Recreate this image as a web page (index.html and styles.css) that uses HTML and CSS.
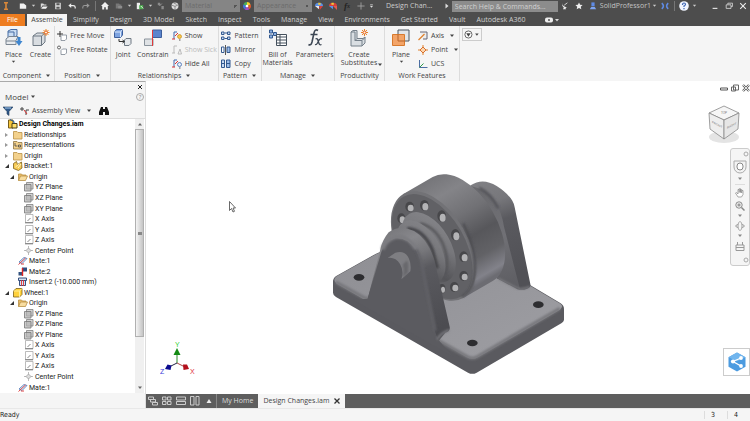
FILE: index.html
```html
<!DOCTYPE html>
<html lang="en">
<head>
  <meta charset="UTF-8">
  <meta name="viewport" content="width=device-width, initial-scale=1.0">
  <title>Design Changes.iam</title>
  <link rel="stylesheet" href="styles.css">
</head>
<body>

<!-- Shared icons -->
<svg class="sprite" aria-hidden="true">
  <symbol id="folder" viewBox="0 0 10 10"><path d="M.5 1.500h3.500l1 1h4v6.500h-8.500z" fill="#f3d18c" stroke="#b78f45" stroke-width=".8"/></symbol>
  <symbol id="folder-open" viewBox="0 0 10 10"><path d="M.5 8.500v-6.500h3l1 1h3.500v1.500" fill="#e9bd68" stroke="#b78f45" stroke-width=".8"/><path d="M.5 8.500l2-4.500h7l-2 4.500z" fill="#f8dda0" stroke="#b78f45" stroke-width=".8"/></symbol>
  <symbol id="plane" viewBox="0 0 10 10"><path d="M2.500.5h6.500v6.500h-6.500z" fill="#d4d4d4" stroke="#808080" stroke-width=".8"/><path d="M.5 2.500h6.500v6.500h-6.500z" fill="#b5b5b5" fill-opacity=".7" stroke="#777" stroke-width=".8"/></symbol>
  <symbol id="axis" viewBox="0 0 10 10"><path d="M1.500.5h7.500v8h-7.500z" fill="#fff" stroke="#aaa" stroke-width=".8"/><path d="M3.500 7l3-3" stroke="#666" fill="none" stroke-width=".8"/><path d="M1 8.800h8" stroke="#777"/></symbol>
  <symbol id="center" viewBox="0 0 10 10"><path d="M4.500 0v9M0 4.500h9" stroke="#bbb"/><path d="M4.500 2l2.500 2.500-2.500 2.500-2.500-2.500z" fill="#ddd" stroke="#999" stroke-width=".7"/></symbol>
  <symbol id="mate-a" viewBox="0 0 10 10"><path d="M1 6l5-4.500 3 1-5 5z" fill="#dce9f7" stroke="#4b76b5" stroke-width=".8"/><path d="M.5 8.500l7-6.500M3 8h3" stroke="#d33" stroke-width=".9"/></symbol>
  <symbol id="mate-b" viewBox="0 0 10 10"><path d="M4 .5h5v4h-5z" fill="#2f4f83"/><path d="M.5 5h4v3.500h-4z" fill="#33527f"/><path d="M4.500 1v8" stroke="#d22" stroke-width="1.400"/></symbol>
  <symbol id="insert" viewBox="0 0 10 10"><path d="M.5 1h8v2.500h-8zM1.500 3.500h6v5h-6z" fill="#d5e2f2" stroke="#36507e"/><path d="M3.500 3v6M5.500 3v6" stroke="#d33" stroke-width=".9"/></symbol>
  <symbol id="assembly" viewBox="0 0 10 10"><path d="M.5 1h4.500v8h-4.500z" fill="#f8c63a" stroke="#765d1a"/><path d="M4 4.500h5v4.500h-5z" fill="#ffdf6b" stroke="#4a3e16"/><path d="M2 .5l4 2v2" stroke="#275a9a" fill="none"/></symbol>
  <symbol id="bracket" viewBox="0 0 10 10"><path d="M.5 2.500l3-2 1 3 4-2.500.5 6-3.500 2.500-5-2z" fill="#f6ca54" stroke="#7d6018" stroke-width=".8"/><path d="M2.500 6l4-3.500M5 7l3-4" stroke="#fff3bf"/></symbol>
  <symbol id="part" viewBox="0 0 10 10"><path d="M.5 3l2.500-2.500h6v6l-2.500 2.500h-6z" fill="#ffd23d" stroke="#7d6018" stroke-width=".8"/><path d="M.5 3h6v6M6.500 3l2.500-2.500" fill="none" stroke="#fff0a0" stroke-width=".9"/></symbol>
  <symbol id="reps" viewBox="0 0 10 10"><path d="M.5 1.500h3.500l1 1h4v6.500h-8.500z" fill="#f3d18c" stroke="#8d7342" stroke-width=".8"/><path d="M2 3v3h2.500M5.500 5h2v2h-2z" fill="none" stroke="#444" stroke-width=".8"/></symbol>
  <symbol id="caret" viewBox="0 0 6 4"><path d="M1 .5h4l-2 2.500z" fill="currentColor"/></symbol>
</svg>

<!-- Title bar -->
<header class="titlebar">
  <button class="tb logo" aria-label="Inventor"><svg viewBox="0 0 10 10"><path d="M2.500 1h5M2.500 9h5M5 1v8" stroke="#d9883a" stroke-width="2"/></svg></button>
  <button class="tb" aria-label="New"><svg viewBox="0 0 10 10"><path d="M1 2h5l3 2.500v4h-8z" fill="#f1f1f1"/></svg></button>
  <button class="drop" aria-label="New options"><svg><use href="#caret"/></svg></button>
  <button class="tb" aria-label="Open"><svg viewBox="0 0 10 10"><path d="M1 8v-6h3l1 1h3v1.500h-5z" fill="#ddd"/><path d="M1.500 8.500l2-3h6l-2 3z" fill="#f6f6f6"/></svg></button>
  <button class="tb" aria-label="Save"><svg viewBox="0 0 10 10"><path d="M1.500 1h7v8h-7z" fill="#ddd"/><path d="M3 1.500h4v2.500h-4zM3 6h4v2.500h-4z" fill="#555"/></svg></button>
  <button class="tb" aria-label="Undo"><svg viewBox="0 0 10 10"><path d="M9 8v-1.500q0-2-2.500-2h-4" fill="none" stroke="#eee" stroke-width="1.500"/><path d="M4 1.500v6l-3.500-3z" fill="#eee"/></svg></button>
  <button class="tb" aria-label="Redo"><svg viewBox="0 0 10 10"><path d="M1 8v-1.500q0-2 2.500-2h4" fill="none" stroke="#999" stroke-width="1.300"/><path d="M6 1.500v6l3.500-3z" fill="#999"/></svg></button>
  <span class="bar"></span>
  <button class="tb" aria-label="Home"><svg viewBox="0 0 10 10"><path d="M5 0l5 5h-1.500v4.500h-2.500v-3h-2v3h-2.500v-4.500h-1.500z" fill="#f1f1f1"/></svg></button>
  <button class="tb" aria-label="Team"><svg viewBox="0 0 10 10"><path d="M1 2h4l1 1h2v5h-7z" fill="#777"/><path d="M4 5h5v3h-5z" fill="#8c8c8c"/></svg></button>
  <button class="drop" aria-label="Team options"><svg><use href="#caret"/></svg></button>
  <button class="tb" aria-label="Select"><svg viewBox="0 0 10 10"><path d="M1 1h4v8h-4z" fill="#eee"/><path d="M4 4h5v5h-5z" fill="#4fae52"/><path d="M6 5l3 3" stroke="#fff"/></svg></button>
  <button class="drop" aria-label="Select options"><svg><use href="#caret"/></svg></button>
  <button class="tb" aria-label="Update"><svg viewBox="0 0 10 10"><path d="M1 1h3v3h-3zM5.500 5h3v4h-3z" fill="#8a8a8a"/><path d="M3 5l3-3" stroke="#aaa"/></svg></button>
  <button class="tb" aria-label="Adjust"><svg viewBox="0 0 10 10"><circle cx="5" cy="5" r="4.300" fill="#ddd"/><path d="M1 4l4 1.500 4-2M5 5.500v4M3 1l4 2" stroke="#777" fill="none"/></svg></button>
  <select class="style-select" aria-label="Material"><option>Material</option></select>
  <button class="tb" aria-label="Color wheel"><svg viewBox="0 0 10 10"><path d="M5 5V0a5 5 0 0 1 4.500 3z" fill="#f5d328"/><path d="M5 5l4.500-2a5 5 0 0 1-1.500 6z" fill="#e2572b"/><path d="M5 5l3 4a5 5 0 0 1-6 0z" fill="#a44fc0"/><path d="M5 5l-3 4a5 5 0 0 1-1.500-6z" fill="#3f74d8"/><path d="M5 5L.5 3a5 5 0 0 1 4.500-3z" fill="#49b05a"/><circle cx="5" cy="5" r="1.700" fill="#fff"/></svg></button>
  <select class="style-select" aria-label="Appearance"><option>Appearance</option></select>
  <button class="tb" aria-label="Adjust appearance"><svg viewBox="0 0 10 10"><path d="M0 5a5 4 0 0 1 10 0z" fill="#5c8fe6"/><path d="M0 5h5v4z" fill="#e9e9e9"/><path d="M5 5h5l-4 5z" fill="#d8403a"/><path d="M4 1h3v2.500h-3z" fill="#eecb3b"/></svg></button>
  <button class="tb" aria-label="Clear appearance"><svg viewBox="0 0 10 10"><path d="M0 5a5 4 0 0 1 10 0z" fill="#d8403a"/><path d="M0 5h5v4z" fill="#5c8fe6"/><path d="M5 5h5v5z" fill="#e35b4f"/><path d="M3 1h3v2.500h-3z" fill="#eecb3b"/></svg></button>
  <button class="tb fx" aria-label="Parameters">f<sub>x</sub></button>
  <button class="tb" aria-label="Add"><svg viewBox="0 0 10 10"><path d="M5 .5v9M.5 5h9" stroke="#aaa"/></svg></button>
  <button class="drop" aria-label="Customize"><svg viewBox="0 0 6 6"><path d="M1 .5h4" stroke="#ddd"/><path d="M.5 2.500h5l-2.500 3z" fill="#ddd"/></svg></button>
  <span class="doc-title">Design Chan...</span>
  <svg class="search-arrow" viewBox="0 0 4 6"><path d="M.5.5v5l3-2.500z" fill="#ddd"/></svg>
  <input class="search" type="text" aria-label="Search" placeholder="Search Help &amp; Commands...">
  <button class="tb" aria-label="Communication"><svg viewBox="0 0 10 10"><path d="M1.500 1q0 5 6 5.500l-2 1 1 1.500h-4l1-2q-2.500-2-2-6z" fill="#eee"/><path d="M4 4l4-3" stroke="#eee"/></svg></button>
  <button class="tb" aria-label="Favorites"><svg viewBox="0 0 10 10"><path d="M5 .5l1.400 3 3.100.3-2.300 2.100.7 3.300-2.900-1.700-2.900 1.700.7-3.300-2.300-2.100 3.100-.3z" fill="#eee"/></svg></button>
  <button class="tb" aria-label="Account"><svg viewBox="0 0 10 10"><path d="M3 .5h4v4.500h-4z" fill="#5f8be6"/><path d="M1 9l2-3h4l2 3z" fill="#7da4f2"/></svg></button>
  <button class="user">SolidProfessor1</button>
  <button class="drop" aria-label="Account options"><svg><use href="#caret"/></svg></button>
  <button class="tb" aria-label="Exchange"><svg viewBox="0 0 10 10"><path d="M1 1.500q4 3.500 0 7M9 1.500q-4 3.500 0 7" fill="none" stroke="#5f8be6" stroke-width="2"/></svg></button>
  <span class="bar"></span>
  <button class="tb help-tb" aria-label="Help"><svg viewBox="0 0 10 10"><circle cx="5" cy="5" r="4.800" fill="#f1f5ff"/><path d="M3.500 4q0-2 1.500-2t1.500 1.500q0 .8-1.500 1.500v1M5 7v1.200" fill="none" stroke="#3d66b5" stroke-width="1.200"/></svg></button>
  <button class="drop" aria-label="Help options"><svg><use href="#caret"/></svg></button>
  <div class="window-buttons">
    <button class="tb" aria-label="Minimize"><svg viewBox="0 0 10 10"><path d="M2 8h6" stroke="#ddd" stroke-width="1.500"/></svg></button>
    <button class="tb" aria-label="Restore"><svg viewBox="0 0 10 10"><path d="M3.500 3v-1.500h6v4h-2M1.500 3.500h6v4.500h-6z" fill="none" stroke="#ddd"/></svg></button>
    <button class="tb" aria-label="Close"><svg viewBox="0 0 10 10"><path d="M1.500 1.500l7 7M8.500 1.500l-7 7" stroke="#eee" stroke-width="1.300"/></svg></button>
  </div>
</header>

<!-- Ribbon tabs -->
<nav class="tabs">
  <button class="tab file">File</button>
  <button class="tab active">Assemble</button>
  <button class="tab">Simplify</button>
  <button class="tab">Design</button>
  <button class="tab">3D Model</button>
  <button class="tab">Sketch</button>
  <button class="tab">Inspect</button>
  <button class="tab">Tools</button>
  <button class="tab">Manage</button>
  <button class="tab">View</button>
  <button class="tab">Environments</button>
  <button class="tab">Get Started</button>
  <button class="tab">Vault</button>
  <button class="tab">Autodesk A360</button>
  <button class="tab tab-toggle" aria-label="Ribbon display"><svg viewBox="0 0 16 6"><rect x="1" y=".5" width="8" height="5" rx="2" fill="#eee"/><circle cx="5" cy="3" r="1" fill="#555"/><path d="M11 2h4l-2 2.500z" fill="#ddd"/></svg></button>
</nav>

<!-- Ribbon -->
<section class="ribbon">
  <div class="group component">
    <div class="tools">
      <button class="big"><svg viewBox="0 0 18 18"><path d="M3 2l3-1.500h6v6l-3 2h-6z" fill="#c9dcf2" stroke="#466ca3"/><path d="M3 3h6v5" fill="none" stroke="#466ca3"/><path d="M1 10l3-2.500h9l-2 4v4h-10z" fill="#e8ebee" stroke="#7a8591"/><path d="M1 12h10" stroke="#7a8591"/><path d="M12.500 8h3v4h2l-3.500 5-3.500-5h2z" fill="#3f86cf"/></svg>Place<svg class="mini"><use href="#caret"/></svg></button>
      <button class="big"><svg viewBox="0 0 18 18"><path d="M1 7l4-3h8v9l-3.500 3.500h-8.500z" fill="#d9dde1" stroke="#6e7983"/><path d="M1 7h8.500v9.500M9.500 7l3.500-3" fill="none" stroke="#6e7983"/><path d="M14 0v7M10.500 3.500h7M11.500 1l5 5M16.500 1l-5 5" stroke="#e9892c"/><circle cx="14" cy="3.500" r="1.500" fill="#fff2d5" stroke="#e9692c"/></svg>Create</button>
    </div>
    <h2>Component <svg class="mini"><use href="#caret"/></svg></h2>
  </div>
  <div class="group position">
    <div class="tools">
      <div class="stack">
        <button><svg viewBox="0 0 10 10"><path d="M3 0v6M0 3h6" stroke="#333"/><path d="M4 5.500l1.500-1.500h4v4l-1.500 1.500h-4z" fill="#fff" stroke="#7c8792" stroke-width=".8"/></svg>Free Move</button>
        <button><svg viewBox="0 0 10 10"><circle cx="2" cy="2.500" r="1.500" fill="none" stroke="#444" stroke-width=".8"/><path d="M4 5.500l1.500-1.500h4v4l-1.500 1.500h-4z" fill="#fff" stroke="#7c8792" stroke-width=".8"/></svg>Free Rotate</button>
      </div>
    </div>
    <h2>Position <svg class="mini"><use href="#caret"/></svg></h2>
  </div>
  <div class="group relations">
    <div class="tools">
      <button class="big"><svg viewBox="0 0 18 18"><path d="M.5 3l2-2.500h6v5.500l-2 2.500h-6z" fill="#7da3e0" stroke="#3d5f9c"/><path d="M.5 3h6v5M6.500 3l2-2.500" fill="none" stroke="#dbe8fb"/><path d="M10.500 11l1.500-1.500h5v5l-2 2h-4.500z" fill="#e5e8eb" stroke="#6e7983"/><path d="M5 10v2.500h5M8.500 11l2 1.500-2 1.500" fill="none" stroke="#333"/></svg>Joint</button>
      <button class="big"><svg viewBox="0 0 18 18"><path d="M8.500 1h9v7.500h-9z" fill="#5b84cd" stroke="#3d5f9c"/><path d="M.5 10h8.500v6.500h-8.500z" fill="#dfe2e5" stroke="#8a939c"/><path d="M8.500 1v16" stroke="#e03b3b"/></svg>Constrain</button>
      <div class="stack">
        <button><svg viewBox="0 0 10 10"><path d="M2 8v-7h3" stroke="#4169ad" fill="none"/><path d="M0 8h3M3 5l3-3" stroke="#d33"/><circle cx="7.500" cy="5.500" r="2" fill="#f6c84a" stroke="#c58a1d" stroke-width=".7"/><path d="M7 9h1.500" stroke="#555"/></svg>Show</button>
        <button disabled><svg viewBox="0 0 10 10"><path d="M2 8v-7h3M0 8h3M6 9l2-5 1.500 5z" stroke="#bbb" fill="none"/></svg>Show Sick</button>
        <button><svg viewBox="0 0 10 10"><path d="M2 8v-7h3" stroke="#4169ad" fill="none"/><path d="M0 8h3M3 5l3-3" stroke="#d33"/><circle cx="7.500" cy="5.500" r="2" fill="#e7f0fb" stroke="#4169ad" stroke-width=".8"/><path d="M7 9h1.500" stroke="#555"/></svg>Hide All</button>
      </div>
    </div>
    <h2>Relationships <svg class="mini"><use href="#caret"/></svg></h2>
  </div>
  <div class="group pattern">
    <div class="tools">
      <div class="stack">
        <button><svg viewBox="0 0 10 10"><path d="M.5 1h2.500v2.500h-2.500zM6.500 1h2.500v2.500h-2.500zM.5 6h2.500v2.500h-2.500zM6.500 6h2.500v2.500h-2.500z" fill="#c7daf3" stroke="#33598f"/><path d="M3.500 2h2.500M3.500 7.500h2.500" stroke="#33598f"/></svg>Pattern</button>
        <button><svg viewBox="0 0 10 10"><path d="M.5 2h2.500v5.500h-2.500z" fill="#fff" stroke="#33598f"/><path d="M6 2h3v5.500h-3z" fill="#9dbde8" stroke="#33598f"/><path d="M4.500 0v10" stroke="#555"/></svg>Mirror</button>
        <button><svg viewBox="0 0 10 10"><path d="M.5 1h3v7.500h-3z" fill="#c7daf3" stroke="#33598f"/><path d="M5.500 1h3.500v7.500h-3.500z" fill="#9dbde8" stroke="#33598f"/><path d="M.5 4.500h3M5.500 4.500h3.500" stroke="#33598f"/></svg>Copy</button>
      </div>
    </div>
    <h2>Pattern <svg class="mini"><use href="#caret"/></svg></h2>
  </div>
  <div class="group manage">
    <div class="tools">
      <button class="big"><svg viewBox="0 0 18 18"><path d="M.5 1h3v3h-3zM4.500 3.500h3v3h-3zM.5 6h3v3h-3z" fill="#8db1e3" stroke="#33598f"/><path d="M7.500 5.500h10v11h-10z" fill="#fff" stroke="#44505c"/><path d="M7.500 8h10M7.500 11h10M7.500 14h10M11 5.500v11" stroke="#44505c"/></svg>Bill of<br>Materials</button>
      <button class="big"><svg viewBox="0 0 18 18"><path d="M12 1.500q-3-2-4 2.500l-2 9q-1 4-3.500 2.500M4.500 5.500h7" fill="none" stroke="#3d4754" stroke-width="1.600"/><path d="M9.500 10q2-1 2.500 1.500l1 3q.7 2 2.500 1M16 10q-2-1-3.500 2l-1 2q-1 2-2.500 1.500" fill="none" stroke="#3d4754" stroke-width="1.300"/></svg>Parameters</button>
    </div>
    <h2>Manage <svg class="mini"><use href="#caret"/></svg></h2>
  </div>
  <div class="group productivity">
    <div class="tools">
      <button class="big"><svg viewBox="0 0 18 18"><path d="M1 3l2-1.500h4v8h6l2-1.500v6l-3 3h-11z" fill="#d9dee2" stroke="#75808a"/><path d="M1 3h4v8.500h7v5.500M5 11.500l2-2M12 11.500l3-3" fill="none" stroke="#75808a"/><path d="M14.500 0v7M11 3.500h7M12 1l5 5M17 1l-5 5" stroke="#e9892c"/><circle cx="14.500" cy="3.500" r="1.500" fill="#fff2d5" stroke="#e9692c"/></svg>Create<br>Substitutes</button>
      <svg class="mini side"><use href="#caret"/></svg>
    </div>
    <h2>Productivity</h2>
  </div>
  <div class="group work">
    <div class="tools">
      <button class="big"><svg viewBox="0 0 18 18"><path d="M6 1h11v11h-11z" fill="#e2e5e8" stroke="#4c5660"/><path d="M.5 5.500h12v11h-12z" fill="#f3a468" stroke="#d77a2e"/><path d="M6 5.500v6.500h6.500" stroke="#b7652a" fill="none"/></svg>Plane<svg class="mini"><use href="#caret"/></svg></button>
      <div class="stack">
        <button><svg viewBox="0 0 10 10"><path d="M2 1h7v7h-4" fill="#eee" stroke="#667"/><path d="M.5 9l6-6" stroke="#e0812e" stroke-width="1.300"/></svg>Axis<svg class="mini"><use href="#caret"/></svg></button>
        <button><svg viewBox="0 0 10 10"><path d="M5 0v10M0 5h10" stroke="#e0812e"/><path d="M5 2l3 3-3 3-3-3z" fill="#fbd5ae" stroke="#d9702a"/></svg>Point<svg class="mini"><use href="#caret"/></svg></button>
        <button><svg viewBox="0 0 10 10"><path d="M1.500 1v7.500h8" stroke="#4c6ea3" fill="none"/><path d="M1.500 8.500l4-4" stroke="#2d9a4a"/></svg>UCS</button>
      </div>
    </div>
    <h2>Work Features</h2>
  </div>
  <button class="ribbon-more" aria-label="More panels"><svg viewBox="0 0 18 10"><circle cx="5" cy="5" r="4" fill="#fff" stroke="#555"/><path d="M2.500 3.500h5l-2.500 4z" fill="#444"/><path d="M12.500 4h4l-2 2.500z" fill="#444"/></svg></button>
</section>

<main class="workspace">
  <!-- Model browser -->
  <aside class="browser">
    <div class="browser-top"><button aria-label="Close browser"><svg viewBox="0 0 6 6"><path d="M1 1l4 4M5 1l-4 4" stroke="#222"/></svg></button></div>
    <div class="browser-title"><button>Model <svg class="mini"><use href="#caret"/></svg></button><button class="help" aria-label="Help">?</button></div>
    <div class="browser-tools">
      <button aria-label="Filter"><svg viewBox="0 0 10 10"><path d="M0 1h10l-4 4.500v4l-2-1.500v-2.500z" fill="#315b8d" stroke="#223c5c" stroke-width=".6"/><path d="M2 2h6" stroke="#a9cdf0"/></svg></button>
      <button class="view"><svg viewBox="0 0 10 10"><path d="M0 3h4M2 1v4M6 9v-5h3" stroke="#444" fill="none"/><path d="M4 4l3 4" stroke="#d33"/></svg>Assembly View <svg class="mini"><use href="#caret"/></svg></button>
      <button aria-label="Find"><svg viewBox="0 0 10 10"><path d="M2 1h2v2h2v-2h2l2 5v3h-4v-3h-2v3h-4v-3z" fill="#111"/></svg></button>
    </div>
    <div class="tree-box">
      <ul class="tree">
        <li class="l0 root"><i></i><svg><use href="#assembly"/></svg>Design Changes.iam</li>
        <li class="l1"><i class="closed"></i><svg><use href="#folder"/></svg>Relationships</li>
        <li class="l1"><i class="closed"></i><svg><use href="#reps"/></svg>Representations</li>
        <li class="l1"><i class="closed"></i><svg><use href="#folder"/></svg>Origin</li>
        <li class="l1"><i class="open"></i><svg><use href="#bracket"/></svg>Bracket:1</li>
        <li class="l2"><i class="open"></i><svg><use href="#folder-open"/></svg>Origin</li>
        <li class="l3"><i></i><svg><use href="#plane"/></svg>YZ Plane</li>
        <li class="l3"><i></i><svg><use href="#plane"/></svg>XZ Plane</li>
        <li class="l3"><i></i><svg><use href="#plane"/></svg>XY Plane</li>
        <li class="l3"><i></i><svg><use href="#axis"/></svg>X Axis</li>
        <li class="l3"><i></i><svg><use href="#axis"/></svg>Y Axis</li>
        <li class="l3"><i></i><svg><use href="#axis"/></svg>Z Axis</li>
        <li class="l3"><i></i><svg><use href="#center"/></svg>Center Point</li>
        <li class="l2"><i></i><svg><use href="#mate-a"/></svg>Mate:1</li>
        <li class="l2"><i></i><svg><use href="#mate-b"/></svg>Mate:2</li>
        <li class="l2"><i></i><svg><use href="#insert"/></svg>Insert:2 (-10.000 mm)</li>
        <li class="l1"><i class="open"></i><svg><use href="#part"/></svg>Wheel:1</li>
        <li class="l2"><i class="open"></i><svg><use href="#folder-open"/></svg>Origin</li>
        <li class="l3"><i></i><svg><use href="#plane"/></svg>YZ Plane</li>
        <li class="l3"><i></i><svg><use href="#plane"/></svg>XZ Plane</li>
        <li class="l3"><i></i><svg><use href="#plane"/></svg>XY Plane</li>
        <li class="l3"><i></i><svg><use href="#axis"/></svg>X Axis</li>
        <li class="l3"><i></i><svg><use href="#axis"/></svg>Y Axis</li>
        <li class="l3"><i></i><svg><use href="#axis"/></svg>Z Axis</li>
        <li class="l3"><i></i><svg><use href="#center"/></svg>Center Point</li>
        <li class="l2"><i></i><svg><use href="#mate-a"/></svg>Mate:1</li>
      </ul>
      <div class="scrollbar">
        <svg class="mini up"><use href="#caret"/></svg>
        <div class="thumb"></div>
        <svg class="mini"><use href="#caret"/></svg>
      </div>
    </div>
  </aside>

  <!-- Graphics window -->
  <section class="stage">
    <div class="canvas">
      <svg class="model" viewBox="0 0 780 660">
        <defs>
          <linearGradient id="rim" gradientUnits="userSpaceOnUse" x1="300" y1="60" x2="480" y2="372"><stop offset="0" stop-color="#737377"/><stop offset=".2" stop-color="#848488"/><stop offset=".42" stop-color="#717175"/><stop offset=".62" stop-color="#57575b"/><stop offset=".8" stop-color="#626266"/><stop offset=".95" stop-color="#82828a"/><stop offset="1" stop-color="#6c6c72"/></linearGradient>
          <linearGradient id="hub" gradientUnits="userSpaceOnUse" x1="270" y1="170" x2="390" y2="360"><stop offset="0" stop-color="#87878b"/><stop offset=".4" stop-color="#77777b"/><stop offset=".75" stop-color="#545458"/><stop offset="1" stop-color="#6c6c70"/></linearGradient>
          <linearGradient id="side" gradientUnits="userSpaceOnUse" x1="230" y1="200" x2="370" y2="500"><stop offset="0" stop-color="#78787c"/><stop offset=".15" stop-color="#88888c"/><stop offset=".3" stop-color="#77777b"/><stop offset=".45" stop-color="#5a5a5f"/><stop offset="1" stop-color="#4c4c51"/></linearGradient>
          <linearGradient id="rear" gradientUnits="userSpaceOnUse" x1="480" y1="60" x2="590" y2="340"><stop offset="0" stop-color="#808084"/><stop offset=".25" stop-color="#77777b"/><stop offset=".45" stop-color="#5a5a5f"/><stop offset="1" stop-color="#515156"/></linearGradient>
          <linearGradient id="rear-face" gradientUnits="userSpaceOnUse" x1="500" y1="90" x2="560" y2="370"><stop offset="0" stop-color="#6a6a6e"/><stop offset=".5" stop-color="#707075"/><stop offset="1" stop-color="#5f5f64"/></linearGradient>
          <linearGradient id="deck" x1="0" y1="0" x2="1" y2="1"><stop offset="0" stop-color="#8e8e93"/><stop offset="1" stop-color="#9e9ea3"/></linearGradient>
          <filter id="soft" x="-20%" y="-20%" width="140%" height="140%"><feGaussianBlur stdDeviation="3"/></filter>
        </defs>
        <!-- base -->
        <path d="M50 347L168 281Q330 200 625 372L722 430Q732 437 732 447L732 480Q731 486 724 490L470 638Q457 645 444 638L48 411Q39 406 39 398L39 363Q40 352 50 347z" fill="#5a5a5f"/>
        <path d="M50 349L168 283Q340 200 625 374L721 431Q732 439 720 449L474 592Q457 601 440 592L345 537L150 419Q143 423 130 417L50 371Q36 360 50 349z" fill="url(#deck)"/>
        <path d="M47 366L128 411Q140 419 152 412M352 540L440 589Q457 600 474 589L720 445" fill="none" stroke="#77777c" stroke-width="10" filter="url(#soft)"/>
        <ellipse cx="117" cy="352" rx="16" ry="10" fill="#2d2d30"/>
        <ellipse cx="655" cy="434" rx="16" ry="10" fill="#2d2d30"/>
        <ellipse cx="457" cy="549" rx="16" ry="10" fill="#2d2d30"/>
        <!-- rear bracket -->
        <path d="M452 76Q488 52 530 78Q562 98 577 122Q583 132 584 142L631 372Q634 382 622 386Q606 392 592 388L525 352L430 300z" fill="url(#rear)"/>
        <path d="M452 78Q500 88 524 122Q546 158 552 200L600 388L525 352L480 240z" fill="url(#rear-face)"/>
        <path d="M478 84Q512 100 535 145" fill="none" stroke="#55555a" stroke-width="8" filter="url(#soft)"/>
        <path d="M535 356L588 384Q606 391 630 380" fill="none" stroke="#808085" stroke-width="5" filter="url(#soft)"/>
        <!-- wheel -->
        <path d="M250 102L338 51A180 104 60 0 1 518 363L430 414z" fill="url(#rim)"/>
        <ellipse cx="340" cy="258" rx="180" ry="104" transform="rotate(60 340 258)" fill="#727276"/>
        <ellipse cx="337" cy="260" rx="173" ry="98" transform="rotate(60 337 260)" fill="#616165"/>
        <path d="M430 190Q470 270 464 340Q457 395 425 410" fill="none" stroke="#4b4b4f" stroke-width="6" filter="url(#soft)"/>
        <g fill="#47474a">
          <ellipse cx="244" cy="175" rx="12" ry="15"/><ellipse cx="269" cy="140" rx="13" ry="15"/><ellipse cx="313" cy="136" rx="13" ry="16"/><ellipse cx="365" cy="168" rx="13" ry="17"/><ellipse cx="406" cy="224" rx="13" ry="17"/><ellipse cx="431" cy="290" rx="13" ry="16"/><ellipse cx="431" cy="348" rx="13" ry="15"/><ellipse cx="403" cy="381" rx="13" ry="15"/><ellipse cx="366" cy="386" rx="10" ry="14"/>
        </g>
        <g fill="#b4b4b6">
          <ellipse cx="247" cy="179" rx="8" ry="10"/><ellipse cx="272" cy="144" rx="9" ry="10"/><ellipse cx="316" cy="140" rx="9" ry="11"/><ellipse cx="368" cy="173" rx="9" ry="12"/><ellipse cx="409" cy="229" rx="9" ry="12"/><ellipse cx="434" cy="293" rx="9" ry="11"/><ellipse cx="434" cy="351" rx="9" ry="10"/><ellipse cx="406" cy="384" rx="9" ry="10"/><ellipse cx="369" cy="389" rx="6" ry="9"/>
        </g>
        <!-- hub -->
        <ellipse cx="326" cy="262" rx="116" ry="66" transform="rotate(60 326 262)" fill="url(#hub)"/>
        <path d="M300 190Q345 200 368 250Q390 300 376 345" fill="none" stroke="#545458" stroke-width="7" filter="url(#soft)"/>
        <ellipse cx="303" cy="276" rx="104" ry="60" transform="rotate(60 303 276)" fill="url(#hub)"/>
        <path d="M262 206Q312 208 338 272L352 325" fill="none" stroke="#444448" stroke-width="10" filter="url(#soft)"/>
        <!-- front bracket -->
        <path d="M143 416L181 268Q187 240 206 217Q238 193 282 213Q322 236 343 300L389 500Q392 514 376 518L358 540L345 545z" fill="url(#side)"/>
        <path d="M143 416L184 276Q193 244 226 235Q262 231 286 268Q299 290 304 318L344 510Q348 530 360 545L400 590L100 420z" fill="#5b5b60"/>
        <path d="M188 268Q196 240 226 231Q264 226 289 268" fill="none" stroke="#7c7c80" stroke-width="12" filter="url(#soft)"/>
        <path d="M289 268Q301 288 307 320L346 512" fill="none" stroke="#626267" stroke-width="8" filter="url(#soft)"/>
        <path d="M352 538Q360 520 388 510" fill="none" stroke="#7c7c81" stroke-width="6" filter="url(#soft)"/>
        <!-- pin -->
        <path d="M203 294L226 278Q256 270 267 296Q274 313 271 334L244 358Q253 334 240 312Q226 290 203 294z" fill="#7e7e82"/>
        <path d="M262 300Q268 320 264 338L248 352Q254 330 248 314z" fill="#68686c" filter="url(#soft)"/>
      </svg>

      <svg class="triad" viewBox="0 0 36 38">
        <path d="M17 22v-12" stroke="#2a8a2a"/><path d="M13.500 14l3.500-7 3.500 7z" fill="#148a14"/>
        <path d="M17 22l-8 4" stroke="#224"/><path d="M5 28l2.500-4.500 4 1-1 4.500z" fill="#0b0b8f"/>
        <path d="M17 22l8 4" stroke="#a44"/><path d="M23 23.500l4 0 2 4.500-5.500 1z" fill="#b3101c"/>
        <text x="15" y="6" fill="#35d335">Y</text><text x="0" y="33" fill="#3a3ad8">Z</text><text x="30" y="33" fill="#e03040">X</text>
      </svg>

      <svg class="cursor" viewBox="0 0 7 12"><path d="M.5.5v9l2-2 1.500 3.500 1.500-.7-1.500-3.300h2.500z" fill="#fff" stroke="#444" stroke-width=".8"/></svg>

      <div class="mdi-buttons">
        <button aria-label="Minimize document"><svg viewBox="0 0 8 8"><path d="M.5 4h7v2h-7z" fill="#fff" stroke="#555"/></svg></button>
        <button aria-label="Restore document"><svg viewBox="0 0 8 8"><path d="M2.500 1h5v5h-5zM.5 3h4v4h-4z" fill="#fff" stroke="#666"/></svg></button>
        <button aria-label="Close document"><svg viewBox="0 0 8 8"><path d="M1 1l6 6M7 1l-6 6" stroke="#666" stroke-width="2.400"/><path d="M1 1l6 6M7 1l-6 6" stroke="#fff" stroke-width=".8"/></svg></button>
      </div>

      <svg class="viewcube" viewBox="0 0 36 40">
        <ellipse cx="18" cy="32" rx="15" ry="6" fill="#e4e4e4"/>
        <path d="M18 1l15 7-15 7-15-7z" fill="#f6f6f6" stroke="#888" stroke-width=".8"/>
        <path d="M3 8l15 7v19l-14-10z" fill="#eee" stroke="#888" stroke-width=".8"/>
        <path d="M33 8l-15 7v19l14-10z" fill="#e6e6e6" stroke="#888" stroke-width=".8"/>
        <text x="15" y="9">TOP</text><text transform="matrix(1 .5 0 1 6 18)">FRONT</text><text transform="matrix(1 -.5 0 1 21 24)">RIGHT</text>
      </svg>

      <div class="navbar">
        <button class="corner" aria-label="Close bar"><svg viewBox="0 0 6 6"><circle cx="3" cy="3" r="2" fill="none" stroke="#aaa"/></svg></button>
        <button aria-label="Wheel"><svg class="wide" viewBox="0 0 14 14"><path d="M1 1h12v6a6 6 0 0 1-12 0z" fill="#f3f3f3" stroke="#aaa"/><rect x="4" y="3" width="6" height="7" rx="3" fill="#fff" stroke="#888"/></svg></button>
        <svg class="mini"><use href="#caret"/></svg>
        <button class="ruled" aria-label="Pan"><svg viewBox="0 0 10 10"><path d="M3 9l-2.500-4 1-.5 1.500 1.500v-4.500h1.200v3-3.800h1.300v3.800-3h1.200v3.500-2.500h1.300v4l-1.500 2.500z" fill="#fff" stroke="#888" stroke-width=".7"/></svg></button>
        <button aria-label="Zoom"><svg viewBox="0 0 10 10"><circle cx="4" cy="4" r="3.200" fill="#fff" stroke="#888"/><path d="M2.500 2.500h3v3h-3z" fill="#999"/><path d="M6.500 6.500l3 3" stroke="#888" stroke-width="1.500"/></svg></button>
        <svg class="mini"><use href="#caret"/></svg>
        <button aria-label="Orbit"><svg viewBox="0 0 10 10"><ellipse cx="5" cy="5" rx="2" ry="4.500" fill="none" stroke="#aaa"/><path d="M3 3.500q-5 1.500 0 3M7 3.500q5 1.500 0 3" fill="none" stroke="#999"/></svg></button>
        <svg class="mini"><use href="#caret"/></svg>
        <button aria-label="Look at"><svg viewBox="0 0 10 10"><path d="M1 4h8v5.500h-8zM1 6.500h8M2.500 1v3M7.500 1v3" fill="none" stroke="#999"/></svg></button>
        <button class="corner end" aria-label="Bar options"><svg viewBox="0 0 6 6"><circle cx="3" cy="3" r="2" fill="none" stroke="#aaa"/></svg></button>
      </div>

      <button class="share" aria-label="Share"><svg viewBox="0 0 18 20"><path d="M9 .5l8.500 4.700v9.600l-8.500 4.700-8.500-4.700v-9.600z" fill="#4c9be0"/><path d="M.5 5.200l8.500-4.700 8.500 4.700-8.500 4z" fill="#70b5ee"/><path d="M13 6l-8 3.500 8 4.500" fill="none" stroke="#fff" stroke-width="1.300"/><circle cx="13" cy="6" r="1.900" fill="#fff"/><circle cx="5" cy="9.500" r="2.100" fill="#fff"/><circle cx="13" cy="14" r="1.900" fill="#fff"/></svg></button>
    </div>

    <div class="doc-tabs">
      <button class="arrange" aria-label="Cascade"><svg viewBox="0 0 10 10"><path d="M.5 1h5v2.500h-5zM2.500 3.500h5v2.500h-5zM4.500 6.500h5v2.500h-5z" fill="#5e5e5e" stroke="#ccc"/></svg></button>
      <button class="arrange" aria-label="Arrange"><svg viewBox="0 0 10 10"><path d="M.5 1h3.500v3h-3.500zM5.500 1h3.500v3h-3.500zM.5 5.500h3.500v3h-3.500zM5.500 5.500h3.500v3h-3.500z" fill="none" stroke="#ccc"/></svg></button>
      <button class="arrange" aria-label="Tile horizontally"><svg viewBox="0 0 10 10"><path d="M.5 1h9v3h-9zM.5 5.500h9v3h-9z" fill="none" stroke="#ccc"/></svg></button>
      <button class="arrange" aria-label="Tile vertically"><svg viewBox="0 0 10 10"><path d="M.5.5h3.500v8.500h-3.500zM6 .5h3v8.500h-3z" fill="none" stroke="#ccc"/></svg></button>
      <button class="arrange" aria-label="Show tabs"><svg viewBox="0 0 10 10"><path d="M2.500 7l2.500-4 2.500 4z" fill="#eee"/></svg></button>
      <button class="doc-tab">My Home</button>
      <button class="doc-tab current">Design Changes.iam <svg viewBox="0 0 6 6"><path d="M.5.5l5 5M5.500.5l-5 5" stroke="#333" stroke-width="1.300"/></svg></button>
    </div>
  </section>
</main>

<footer class="status">
  <span class="ready">Ready</span>
  <span class="count">3</span>
  <span class="count">4</span>
</footer>

</body>
</html>
```
FILE: styles.css
```css
* {
  box-sizing: border-box;
}

body {
  margin: 0;
  height: 100vh;
  display: flex;
  flex-direction: column;
  overflow: hidden;
  font-family: "Open Sans", "Noto Sans", sans-serif;
  font-size: 7px;
  line-height: 8px;
  color: #444;
  background-color: #f5f5f5;
}

button {
  display: flex;
  align-items: center;
  flex: none;
  margin: 0;
  padding: 0;
  border: none;
  background: none;
  font: inherit;
  color: inherit;
  white-space: nowrap;
}

svg {
  flex: none;
}

.sprite {
  position: absolute;
  width: 0;
  height: 0;
}

.mini {
  width: 6px;
  height: 4px;
}

/* Title bar */
.titlebar {
  flex: none;
  display: flex;
  align-items: center;
  height: 12px;
  color: #ccc;
  background-color: #4d4d4d;
}

.tb {
  width: 14px;
  height: 12px;
  justify-content: center;
}

.tb svg {
  width: 8px;
  height: 8px;
}

.logo {
  width: 16px;
  padding-right: 5px;
}

.help-tb svg {
  width: 10px;
  height: 10px;
}

.fx {
  font-family: "Liberation Serif", serif;
  font-style: italic;
  font-weight: bold;
  font-size: 9px;
  color: #222;
}

.fx sub {
  font-size: 6px;
}

.drop {
  width: 7px;
  justify-content: center;
}

.drop svg {
  width: 5px;
  height: 4px;
}

.bar {
  width: 1px;
  height: 10px;
  margin: 0 2px;
  background-color: #777;
}

.style-select {
  appearance: none;
  width: 58px;
  height: 12px;
  padding: 0 3px;
  border: none;
  border-radius: 0;
  font: inherit;
  line-height: 12px;
  color: #6c6c6c;
  background: linear-gradient(135deg, #555 50%, transparent 50%) 52px 5px / 3px 3px no-repeat, #858585;
}

.doc-title {
  flex: 1;
  padding-left: 11px;
}

.search-arrow {
  width: 4px;
  height: 6px;
  margin-right: 3px;
}

.search {
  width: 106px;
  height: 11px;
  padding: 0 3px;
  border: none;
  font: inherit;
  color: #ddd;
  background-color: #8c8c8c;
}

.search::placeholder {
  color: #d0d0d0;
}

.user {
  color: #c4c4c4;
}

.window-buttons {
  display: flex;
  margin-left: 10px;
}

/* Ribbon tabs */
.tabs {
  flex: none;
  display: flex;
  gap: 1px;
  height: 14px;
  padding-top: 2px;
  color: #d0d0d0;
  background-color: #4d4d4d;
}

.tab {
  padding: 0 5px;
}

.file {
  width: 25px;
  margin-right: 1px;
  justify-content: center;
  color: #fff;
  background-color: #ee7d20;
}

.active {
  width: 40px;
  justify-content: center;
  color: #444;
  background-color: #f5f5f5;
}

.tab-toggle {
  margin-left: 8px;
}

.tab-toggle svg {
  width: 16px;
  height: 6px;
}

/* Ribbon */
.ribbon {
  flex: none;
  display: flex;
  height: 55px;
  background-color: #f5f5f5;
}

.group {
  display: flex;
  flex-direction: column;
  justify-content: space-between;
  border-right: 1px solid #dcdcdc;
}

.group h2 {
  display: flex;
  align-items: center;
  justify-content: center;
  gap: 4px;
  height: 10px;
  margin: 0;
  font-size: 7px;
  font-weight: normal;
}

.tools {
  display: flex;
  justify-content: center;
  gap: 5px;
  padding-top: 3px;
}

.big {
  flex-direction: column;
  align-self: flex-start;
  min-width: 22px;
  text-align: center;
}

.big svg {
  width: 18px;
  height: 18px;
  margin-bottom: 4px;
}

.big .mini {
  width: 5px;
  height: 4px;
  margin: 1px 0 0;
}

.stack {
  display: flex;
  flex-direction: column;
}

.stack button {
  height: 14px;
  gap: 3px;
}

.stack svg {
  width: 10px;
  height: 10px;
}

.stack .mini {
  width: 6px;
  height: 4px;
  margin-left: 2px;
}

.stack button:disabled {
  color: #bbb;
}

.component { width: 55px; }
.position { width: 56px; }
.relations { width: 108px; }
.pattern { width: 43px; }
.manage { width: 73px; }
.productivity { width: 50px; }
.work { width: 75px; }

.manage .tools,
.relations .tools {
  gap: 3px;
}

.productivity .tools {
  gap: 0;
  padding-left: 5px;
}

.side {
  align-self: flex-end;
}

.work .tools {
  justify-content: flex-start;
  gap: 6px;
  padding-left: 5px;
}

.ribbon-more {
  height: 13px;
  margin: 2px;
  padding: 0 1px;
  border: 1px solid #ccc;
}

.ribbon-more svg {
  width: 16px;
  height: 9px;
}

/* Workspace */
.workspace {
  flex: 1;
  display: flex;
  min-height: 0;
}

.browser {
  width: 146px;
  flex: none;
  display: flex;
  flex-direction: column;
  padding-bottom: 15px;
  border-top: 1px solid #aaa;
  border-right: 1px solid #ddd;
}

.browser-top {
  display: flex;
  justify-content: flex-end;
  height: 9px;
  padding-right: 2px;
}

.browser-top svg {
  width: 6px;
  height: 6px;
}

.browser-title {
  display: flex;
  align-items: center;
  justify-content: space-between;
  height: 12px;
  padding: 0 1px 0 5px;
  font-size: 8px;
}

.browser-title button {
  gap: 2px;
}

.browser-title .help {
  width: 8px;
  height: 8px;
  justify-content: center;
  border: 1px solid #aaa;
  border-radius: 50%;
  font-size: 6px;
  color: #888;
}

.browser-tools {
  display: flex;
  align-items: center;
  gap: 7px;
  height: 15px;
  padding-left: 3px;
}

.browser-tools svg {
  width: 10px;
  height: 10px;
}

.browser-tools .view {
  gap: 2px;
}

.browser-tools .mini {
  width: 6px;
  height: 4px;
  margin-left: 4px;
}

.tree-box {
  flex: 1;
  display: flex;
  min-height: 0;
  border-top: 1px solid #ddd;
  background-color: #fff;
}

.tree {
  flex: 1;
  display: flex;
  flex-direction: column;
  margin: 0;
  padding: 0;
  list-style: none;
  font-family: Roboto, "DejaVu Sans Condensed", sans-serif;
  color: #222;
}

.tree li {
  flex: 1;
  display: flex;
  align-items: center;
  min-height: 0;
  white-space: nowrap;
}

.tree svg {
  width: 10px;
  height: 10px;
  margin-right: 1px;
}

.tree i {
  flex: none;
  width: 8px;
}

.tree .closed::before,
.tree .open::before {
  content: "";
  display: block;
  width: 0;
  height: 0;
}

.tree .closed::before {
  border: 2px solid transparent;
  border-left: 3px solid #999;
}

.tree .open::before {
  border-left: 4px solid transparent;
  border-bottom: 4px solid #333;
}

.root {
  font-weight: bold;
  color: #000;
}

.l1 { padding-left: 5px; }
.l2 { padding-left: 10px; }
.l3 { padding-left: 16px; }

.scrollbar {
  width: 9px;
  margin-right: 1px;
  display: flex;
  flex-direction: column;
  align-items: center;
  padding: 3px 0;
  color: #666;
  background-color: #f0f0f0;
}

.up {
  transform: rotate(180deg);
}

.thumb {
  width: 9px;
  height: 208px;
  margin: 3px 0 auto;
  border: 1px solid #b0b0b0;
  background: linear-gradient(#888, #888) 2px center / 4px 3px no-repeat, linear-gradient(90deg, #f4f4f4, #c4c4c4);
}

/* Graphics window */
.stage {
  flex: 1;
  display: flex;
  flex-direction: column;
  min-width: 0;
}

.canvas {
  flex: 1;
  position: relative;
  background-color: #fff;
}

.model {
  position: absolute;
  left: 174px;
  top: 79px;
  width: 260px;
  height: 220px;
}

.triad {
  position: absolute;
  left: 14px;
  bottom: 15px;
  width: 36px;
  height: 38px;
}

.triad text {
  font-family: "Liberation Sans", sans-serif;
  font-size: 7px;
}

.cursor {
  position: absolute;
  left: 83px;
  top: 120px;
  width: 7px;
  height: 12px;
}

.mdi-buttons {
  position: absolute;
  top: 3px;
  right: 0;
  display: flex;
  gap: 3px;
}

.mdi-buttons svg {
  width: 8px;
  height: 8px;
}

.viewcube {
  position: absolute;
  top: 24px;
  right: 8px;
  width: 36px;
  height: 40px;
}

.viewcube text {
  font-family: "Liberation Sans", sans-serif;
  font-size: 3px;
  fill: #777;
}

.navbar {
  position: absolute;
  top: 67px;
  right: 0;
  width: 20px;
  display: flex;
  flex-direction: column;
  align-items: center;
  gap: 3px;
  padding: 2px 0;
  border: 1px solid #ccc;
  border-radius: 3px;
  color: #888;
  background-color: #f5f5f5;
}

.navbar button svg {
  width: 10px;
  height: 10px;
}

.navbar .wide {
  width: 14px;
  height: 14px;
}

.navbar .corner {
  align-self: flex-end;
}

.navbar .corner svg {
  width: 6px;
  height: 6px;
}

.navbar .ruled {
  padding-top: 3px;
  border-top: 1px solid #ddd;
}

.navbar .end {
  margin-top: 3px;
}

.share {
  position: absolute;
  right: 0;
  bottom: 18px;
  width: 27px;
  height: 28px;
  justify-content: center;
  border: 1px solid #ccc;
  background-color: #fff;
}

.share svg {
  width: 18px;
  height: 20px;
}

.doc-tabs {
  flex: none;
  display: flex;
  height: 14px;
  color: #ddd;
  background-color: #5e5e5e;
}

.arrange {
  width: 14px;
  justify-content: center;
}

.arrange svg {
  width: 10px;
  height: 10px;
}

.doc-tab {
  padding: 0 5px;
  border-left: 1px solid #888;
}

.current {
  gap: 5px;
  border: none;
  color: #444;
  background-color: #f5f5f5;
}

.current svg {
  width: 6px;
  height: 6px;
}

/* Status bar */
.status {
  flex: none;
  display: flex;
  align-items: center;
  height: 13px;
  border-top: 1px solid #e8e8e8;
  font-family: "DejaVu Sans Condensed", "DejaVu Sans", sans-serif;
  color: #222;
}

.ready {
  flex: 1;
}

.count {
  width: 23px;
  padding-left: 6px;
  border-left: 1px solid #ddd;
}
```
